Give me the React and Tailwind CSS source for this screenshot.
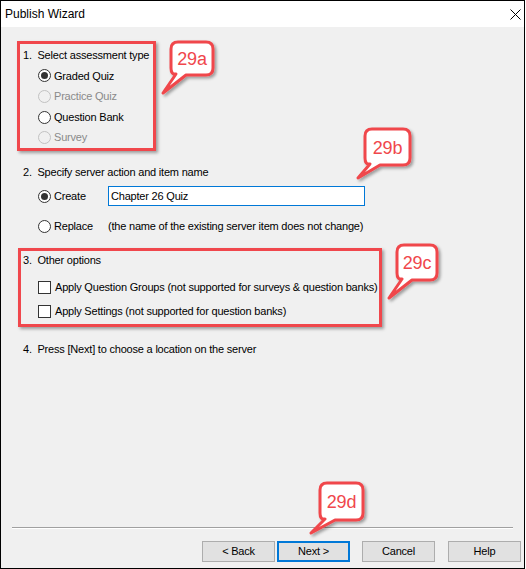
import React from "react";

const RED = "#f0474c";

function Radio({ checked, disabled }) {
  return (
    <span
      className={
        disabled
          ? "w-[13px] h-[13px] rounded-full border border-[#c2c2c2] bg-[#f0f0f0] shrink-0"
          : "w-[13px] h-[13px] rounded-full border border-[#333333] bg-white shrink-0 flex items-center justify-center"
      }
    >
      {checked && <span className="w-[7px] h-[7px] rounded-full bg-[#333333]" />}
    </span>
  );
}

function Check() {
  return <span className="w-[13px] h-[13px] border border-[#333333] bg-white shrink-0" />;
}

function Option({ label, checked, disabled }) {
  return (
    <div className="h-[20.6px] flex items-center gap-[3px] pl-[15px]">
      <Radio checked={checked} disabled={disabled} />
      <span className={disabled ? "text-[#8a8a8a]" : ""}>{label}</span>
    </div>
  );
}

// callout bubble drawn in page coordinates
function bubble(x, y, w, h, tx, ty) {
  const r = 7;
  return `M${x + r},${y} H${x + w - r} Q${x + w},${y} ${x + w},${y + r} V${y + h - r} Q${x + w},${y + h} ${x + w - r},${y + h} H${x + 15} L${tx},${ty} L${x + 5},${y + h - 1} Q${x},${y + h} ${x},${y + h - r} V${y + r} Q${x},${y} ${x + r},${y} Z`;
}

const callouts = [
  { x: 170, y: 41, w: 42, h: 33, tx: 162, ty: 92, label: "29a" },
  { x: 364, y: 128, w: 45, h: 36, tx: 357, ty: 177, label: "29b" },
  { x: 396, y: 244, w: 40, h: 35, tx: 388, ty: 297, label: "29c" },
  { x: 319, y: 482, w: 43, h: 37, tx: 310, ty: 532, label: "29d" },
];

function Callouts() {
  return (
    <svg className="absolute inset-0 pointer-events-none" width="526" height="569">
      <defs>
        <filter id="sh" x="-20%" y="-20%" width="150%" height="150%">
          <feDropShadow dx="2" dy="2" stdDeviation="1.5" floodColor="#000" floodOpacity="0.35" />
        </filter>
      </defs>
      {callouts.map((c) => (
        <g key={c.label}>
          <path d={bubble(c.x, c.y, c.w, c.h, c.tx, c.ty)} fill="#fff" stroke={RED} strokeWidth="3" strokeLinejoin="round" filter="url(#sh)" />
          <text
            x={c.x + c.w / 2}
            y={c.y + c.h / 2 + 6.5}
            textAnchor="middle"
            fill={RED}
            fontSize="18"
            fontFamily="'Liberation Sans', Arial, sans-serif"
          >
            {c.label}
          </text>
        </g>
      ))}
    </svg>
  );
}

function Button({ children, primary }) {
  return (
    <div
      className={
        primary
          ? "w-[73px] h-[21px] border-2 border-[#0078d7] bg-[#e1e1e1] flex items-center justify-center"
          : "w-[73px] h-[21px] border border-[#adadad] bg-[#e1e1e1] flex items-center justify-center"
      }
    >
      {children}
    </div>
  );
}

export default function App() {
  return (
    <div
      className="relative w-[525px] h-[569px] border border-black bg-[#f0f0f0] flex flex-col text-[11px] tracking-[-0.2px] whitespace-nowrap text-black overflow-hidden"
      style={{ fontFamily: "'Liberation Sans', Arial, sans-serif" }}
    >
      {/* title bar */}
      <div className="h-[26px] bg-white flex items-center justify-between pl-[4px] pr-[3px] shrink-0">
        <span className="text-[12px] tracking-normal">Publish Wizard</span>
        <svg width="11" height="11" viewBox="0 0 11 11">
          <path d="M0.5 0.5 L10.5 10.5 M10.5 0.5 L0.5 10.5" stroke="#000" strokeWidth="1" />
        </svg>
      </div>

      <div className="flex-1 flex flex-col pl-[16px]">
        {/* section 1 */}
        <div className="mt-[14px] w-[139px] h-[110px] border-[3px] border-[#f0474c] shadow-[2px_2px_3px_rgba(0,0,0,0.35)] pl-[3px] pt-[1px]">
          <div className="h-[20.6px] flex items-center">1.&nbsp;&nbsp;Select assessment type</div>
          <Option label="Graded Quiz" checked />
          <Option label="Practice Quiz" disabled />
          <Option label="Question Bank" />
          <Option label="Survey" disabled />
        </div>

        {/* section 2 */}
        <div className="ml-[6px] mt-[11px] h-[20px] flex items-center">2.&nbsp;&nbsp;Specify server action and item name</div>
        <div className="ml-[6px] mt-[4px] h-[20px] flex items-center pl-[15px]">
          <Radio checked />
          <span className="ml-[3px] w-[54px]">Create</span>
          <div className="w-[257px] h-[20px] border border-[#0078d7] bg-white flex items-center pl-[2px]">Chapter 26 Quiz</div>
        </div>
        <div className="ml-[6px] mt-[10px] h-[20px] flex items-center pl-[15px]">
          <Radio />
          <span className="ml-[3px] w-[54px]">Replace</span>
          <span>(the name of the existing server item does not change)</span>
        </div>

        {/* section 3 */}
        <div className="ml-[1px] mt-[12px] w-[364px] h-[79px] border-[3px] border-[#f0474c] shadow-[2px_2px_3px_rgba(0,0,0,0.35)] pl-[2px]">
          <div className="h-[18px] flex items-center">3.&nbsp;&nbsp;Other options</div>
          <div className="mt-[8px] h-[20px] flex items-center gap-[4px] pl-[15px]">
            <Check />
            <span>Apply Question Groups (not supported for surveys &amp; question banks)</span>
          </div>
          <div className="mt-[4px] h-[20px] flex items-center gap-[4px] pl-[15px]">
            <Check />
            <span>Apply Settings (not supported for question banks)</span>
          </div>
        </div>

        {/* section 4 */}
        <div className="ml-[6px] mt-[12px] h-[20px] flex items-center">4.&nbsp;&nbsp;Press [Next] to choose a location on the server</div>
      </div>

      {/* footer */}
      <div className="mx-[11px] border-t border-[#a0a0a0] border-b border-b-white shrink-0" />
      <div className="flex justify-end pr-[3px] mt-[12px] mb-[6px] shrink-0">
        <Button>&lt; Back</Button>
        <div className="ml-[2px]">
          <Button primary>Next &gt;</Button>
        </div>
        <div className="ml-[12px]">
          <Button>Cancel</Button>
        </div>
        <div className="ml-[13px]">
          <Button>Help</Button>
        </div>
      </div>

      <Callouts />
    </div>
  );
}
